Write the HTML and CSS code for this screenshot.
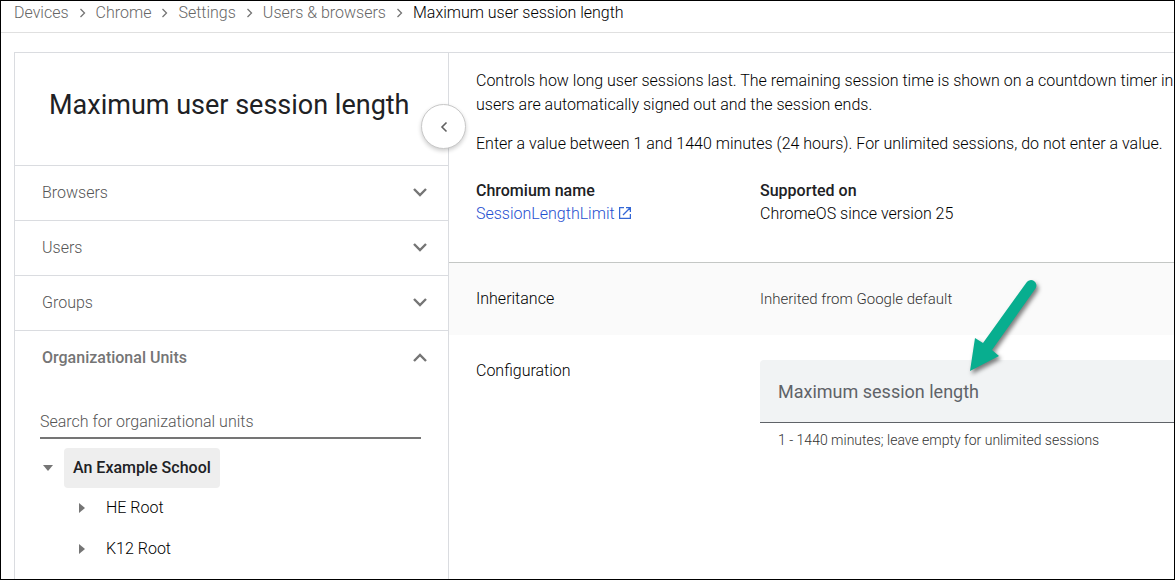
FILE: index.html
```
<!DOCTYPE html>
<html lang="en">
<head>
<meta charset="utf-8">
<meta name="viewport" content="width=device-width, initial-scale=1">
<title>Maximum user session length</title>
<link rel="stylesheet" href="styles.css">
</head>
<body>
<div class="page">
  <nav class="breadcrumb" aria-label="Breadcrumb">
    <a href="#">Devices</a>
    <svg class="sep" viewBox="0 0 7 10"><path d="M1.500 1l4 4-4 4"/></svg>
    <a href="#">Chrome</a>
    <svg class="sep" viewBox="0 0 7 10"><path d="M1.500 1l4 4-4 4"/></svg>
    <a href="#">Settings</a>
    <svg class="sep" viewBox="0 0 7 10"><path d="M1.500 1l4 4-4 4"/></svg>
    <a href="#">Users &amp; browsers</a>
    <svg class="sep" viewBox="0 0 7 10"><path d="M1.500 1l4 4-4 4"/></svg>
    <span class="current" aria-current="page">Maximum user session length</span>
  </nav>

  <div class="card">
    <aside class="side">
      <h1 class="title">Maximum user session length</h1>
      <button class="collapse" type="button" aria-label="Collapse panel">
        <svg class="collapse-icon" viewBox="0 0 8 12"><path d="M6.500 1.500L2 6l4.500 4.500"/></svg>
      </button>
      <button class="section" type="button">Browsers
        <svg class="chevron" viewBox="0 0 14 10"><path d="M1 1l6 6 6-6"/></svg>
      </button>
      <button class="section" type="button">Users
        <svg class="chevron" viewBox="0 0 14 10"><path d="M1 1l6 6 6-6"/></svg>
      </button>
      <button class="section" type="button">Groups
        <svg class="chevron" viewBox="0 0 14 10"><path d="M1 1l6 6 6-6"/></svg>
      </button>
      <button class="section open" type="button" aria-expanded="true">Organizational Units
        <svg class="chevron" viewBox="0 0 14 10"><path d="M1 8l6-6 6 6"/></svg>
      </button>
      <div class="units">
        <input class="search" type="text" aria-label="Search for organizational units" placeholder="Search for organizational units">
        <ul class="tree">
          <li class="node root">
            <svg class="arrow-down" viewBox="0 0 10 6"><path d="M0 0h10L5 6z"/></svg>
            <button class="unit selected" type="button">An Example School</button>
          </li>
          <li class="node child">
            <svg class="arrow-right" viewBox="0 0 6 10"><path d="M0 0l6 5-6 5z"/></svg>
            <button class="unit" type="button">HE Root</button>
          </li>
          <li class="node child">
            <svg class="arrow-right" viewBox="0 0 6 10"><path d="M0 0l6 5-6 5z"/></svg>
            <button class="unit" type="button">K12 Root</button>
          </li>
        </ul>
      </div>
    </aside>

    <main class="main">
      <section class="intro">
        <p class="description">Controls how long user sessions last. The remaining session time is shown on a countdown timer in<br>users are automatically signed out and the session ends.</p>
        <p class="description">Enter a value between 1 and 1440 minutes (24 hours). For unlimited sessions, do not enter a value.</p>
        <dl class="facts">
          <div>
            <dt>Chromium name</dt>
            <dd><a class="link" href="#">SessionLengthLimit<svg class="external" viewBox="0 0 12 12"><path d="M5 .6H.6v10.8h10.8V7M7 .6h4.4V5M11.2.8L4 8"/></svg></a></dd>
          </div>
          <div>
            <dt>Supported on</dt>
            <dd>ChromeOS since version 25</dd>
          </div>
        </dl>
      </section>
      <section class="setting inheritance">
        <h2 class="setting-name">Inheritance</h2>
        <p class="inherited">Inherited from Google default</p>
      </section>
      <section class="setting configuration">
        <h2 class="setting-name">Configuration</h2>
        <div class="field">
          <input class="length" type="text" aria-label="Maximum session length" aria-describedby="hint" placeholder="Maximum session length">
          <p class="hint" id="hint">1 - 1440 minutes; leave empty for unlimited sessions</p>
          <svg class="pointer" viewBox="0 0 80 106" aria-hidden="true">
            <path d="M10 97L15 64l8 5L66.500 8.500a5 5 0 0 1 9 6L32 76l7 6z"/>
          </svg>
        </div>
      </section>
    </main>
  </div>
</div>
</body>
</html>
```
FILE: styles.css
```
* {
  box-sizing: border-box;
}

body {
  margin: 0;
  font: 300 16px/24px Roboto, sans-serif;
  color: #000;
}

h1, h2, p, dl, dd, ul {
  margin: 0;
  padding: 0;
  font-weight: inherit;
}

a {
  color: inherit;
  text-decoration: none;
}

button, input {
  border: 0;
  padding: 0;
  background: none;
  font: inherit;
  color: inherit;
}

svg {
  flex: none;
  fill: none;
}

.page {
  display: flex;
  flex-direction: column;
  height: 100vh;
  overflow: hidden;
  border: 1px solid #000;
}

.breadcrumb {
  display: flex;
  flex: none;
  align-items: center;
  gap: 10px;
  padding: 0 13px 7px;
  border-bottom: 1px solid #e0e0e0;
  color: #666;
  white-space: nowrap;
}

.current {
  color: #000;
}

.sep {
  width: 7px;
  height: 10px;
  stroke: #757575;
  stroke-width: 1.3;
}

.card {
  display: flex;
  flex: 1;
  margin: 19px 0 0 13px;
  border-top: 1px solid #dadce0;
  border-left: 1px solid #dadce0;
}

.side {
  position: relative;
  flex: none;
  width: 434px;
  border-right: 1px solid #dadce0;
}

.title {
  padding: 36px 34px 44px;
  font-size: 27px;
  font-weight: 400;
  line-height: 32px;
  color: #202124;
  white-space: nowrap;
}

.collapse {
  position: absolute;
  top: 51px;
  right: -18px;
  display: grid;
  place-items: center;
  width: 45px;
  height: 45px;
  border: 1px solid #c8c8c8;
  border-radius: 50%;
  background: #fff;
  box-shadow: 0 2px 4px rgba(0, 0, 0, .2);
}

.collapse-icon {
  width: 8px;
  height: 12px;
  stroke: #616161;
  stroke-width: 1.6;
}

.section {
  display: flex;
  align-items: center;
  justify-content: space-between;
  width: 100%;
  height: 55px;
  padding: 0 21px 0 27px;
  border-top: 1px solid #dadce0;
  color: #555;
}

.open {
  font-weight: 500;
  color: #757575;
}

.chevron {
  width: 14px;
  height: 10px;
  stroke: #757575;
  stroke-width: 2.4;
}

.units {
  padding: 24px 27px 0 25px;
}

.search {
  width: 100%;
  height: 30px;
  padding-bottom: 4px;
  border-bottom: 2px solid #757575;
}

.search::placeholder {
  color: #555;
  opacity: 1;
}

.tree {
  padding-top: 9px;
  list-style: none;
}

.node {
  display: flex;
  align-items: center;
  height: 40px;
}

.root {
  gap: 11px;
  padding-left: 3px;
}

.child {
  gap: 12px;
  padding-left: 39px;
}

.child + .child {
  margin-top: 1px;
}

.unit {
  height: 40px;
  padding: 0 9px;
  border-radius: 4px;
}

.selected {
  background: #eee;
  font-weight: 500;
  color: #202124;
}

.arrow-down {
  width: 10px;
  height: 6px;
  fill: #757575;
}

.arrow-right {
  width: 6px;
  height: 10px;
  fill: #757575;
}

.main {
  flex: 1;
  min-width: 0;
}

.intro {
  padding: 16px 0 37px 27px;
  border-bottom: 1px solid #c4c7c5;
}

.description {
  margin-bottom: 15px;
  white-space: nowrap;
}

.facts, .setting {
  display: grid;
  grid-template-columns: 284px 1fr;
}

.facts {
  padding-top: 8px;
  line-height: 23px;
}

.facts dt {
  font-weight: 500;
  color: #202124;
}

.link {
  color: #1f50d0;
}

.external {
  width: 12px;
  height: 12px;
  margin-left: 4px;
  stroke: #3367d6;
  stroke-width: 1.3;
}

.setting {
  padding-left: 27px;
}

.inheritance {
  align-items: center;
  height: 72px;
  background: #fafafa;
}

.configuration {
  padding-top: 25px;
}

.setting-name {
  font-size: 16px;
}

.inherited {
  font-size: 15px;
  color: #333;
}

.configuration .setting-name {
  line-height: 22px;
}

.field {
  position: relative;
}

.length {
  display: block;
  width: 100%;
  height: 63px;
  padding: 0 18px;
  border-bottom: 1px solid #5f6368;
  border-radius: 4px 0 0 0;
  background: #f1f3f4;
  font-size: 18px;
  font-weight: 400;
}

.length::placeholder {
  color: #5f6368;
  opacity: 1;
}

.hint {
  padding: 5px 18px;
  font-size: 14px;
  color: #333;
}

.pointer {
  position: absolute;
  top: -86px;
  left: 200px;
  width: 80px;
  height: 106px;
  fill: #08ae8f;
  filter: drop-shadow(2px 3px 2px rgba(0, 0, 0, .5));
}
```
